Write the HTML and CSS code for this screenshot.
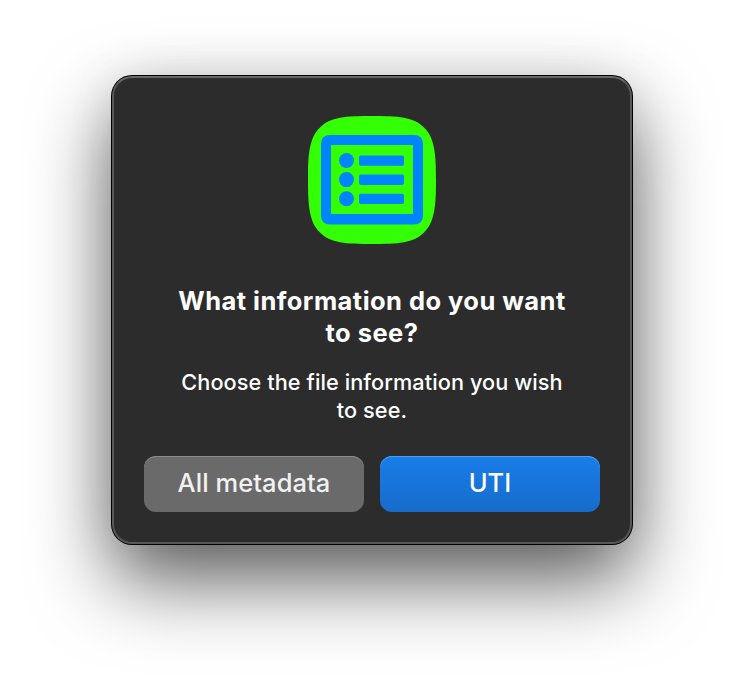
FILE: index.html
```html
<!DOCTYPE html>
<html lang="en">
<head>
<meta charset="utf-8">
<title>File information</title>
<link rel="stylesheet" href="styles.css">
</head>
<body>
<main class="dialog" role="alertdialog" aria-labelledby="title" aria-describedby="message">
  <svg class="icon" viewBox="0 0 128 128" aria-hidden="true">
    <path fill="#33ff05" d="M64 0C90 0 106 1 116 11.500C127 22 128 39 128 64C128 89 127 106 116 116.500C106 127 90 128 64 128C38 128 22 127 12 116.500C1 106 0 89 0 64C0 39 1 22 12 11.500C22 1 38 0 64 0Z"/>
    <path fill="#0085ff" fill-rule="evenodd" d="M22 19H106Q115 19 115 28V99.500Q115 108.500 106 108.500H22Q13 108.500 13 99.500V28Q13 19 22 19ZM23 29V98H105V29Z"/>
    <g fill="#0085ff">
      <circle cx="38.500" cy="44.500" r="7.500"/>
      <circle cx="38.500" cy="63.600" r="7.500"/>
      <circle cx="38.500" cy="82.700" r="7.500"/>
      <rect x="51" y="39.500" width="45" height="10.300" rx="1.800"/>
      <rect x="51" y="58.600" width="45" height="10.300" rx="1.800"/>
      <rect x="51" y="77.700" width="45" height="10.300" rx="1.800"/>
    </g>
  </svg>
  <h1 class="title" id="title">What information do you want<br>to see?</h1>
  <p class="message" id="message">Choose the file information you wish<br>to see.</p>
  <div class="actions">
    <button class="button button-secondary">All metadata</button>
    <button class="button button-primary">UTI</button>
  </div>
</main>
</body>
</html>
```
FILE: styles.css
```css
* { box-sizing: border-box; }

body {
  margin: 0;
  min-height: 692px;
  padding: 76px 112px;
  background: #fff;
  font-family: Inter, "Liberation Sans", sans-serif;
  overflow: hidden;
}

.dialog {
  width: 520px;
  height: 468px;
  padding: 38px 30px 30px;
  border: 2px solid #575757;
  border-top-color: #686868;
  border-radius: 20px;
  background: #2c2c2c;
  box-shadow: 0 0 0 1px #000, 0 36px 80px rgba(0, 0, 0, .64), 0 0 50px rgba(0, 0, 0, .08);
  color: #fff;
  display: flex;
  flex-direction: column;
  align-items: center;
  text-align: center;
}

.icon {
  width: 128px;
  height: 128px;
  flex: none;
}

.title {
  margin: 41px 0 0;
  font-size: 25.5px;
  line-height: 32px;
  font-weight: 750;
  letter-spacing: .45px;
  white-space: nowrap;
}

.message {
  margin: 19px 0 0;
  font-size: 21.7px;
  font-weight: 450;
  line-height: 28px;
  letter-spacing: .08px;
  white-space: nowrap;
}

.actions {
  display: grid;
  grid-template-columns: 220px 220px;
  gap: 16px;
  margin-top: auto;
}

.button {
  height: 56px;
  padding: 0 0 2px;
  border: 0;
  border-radius: 12px;
  font: 450 25.5px/54px Inter, "Liberation Sans", sans-serif;
  letter-spacing: .05px;
}

.button-secondary {
  background: #6a6a6a;
  box-shadow: inset 0 1px #8b8b8b;
  color: #f1f1f1;
}

.button-primary {
  background: linear-gradient(#1a7de9, #166ccb);
  box-shadow: inset 0 1px #50a0f0;
  color: #fff;
}
```
